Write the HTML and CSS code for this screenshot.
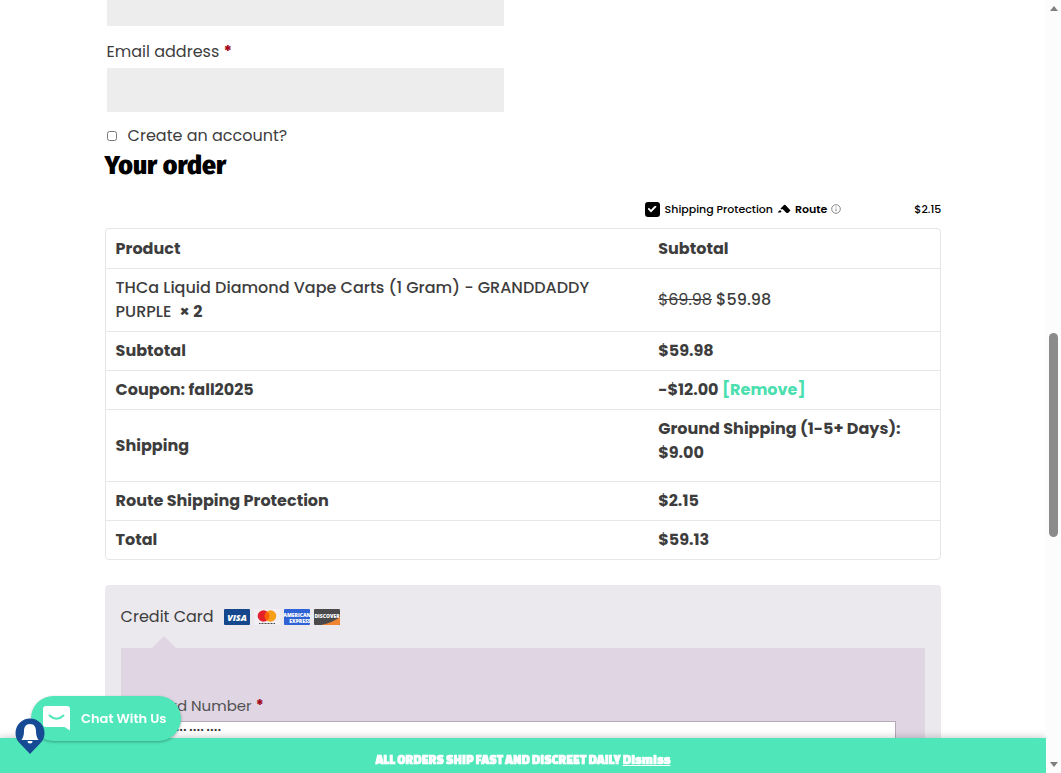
FILE: index.html
```
<!DOCTYPE html>
<html lang="en">
<head>
    <meta charset="UTF-8">
    <meta name="viewport" content="width=device-width, initial-scale=1.0">
    <title>Checkout</title>
    <link rel="stylesheet" href="styles.css">
</head>
<body>
    <main class="checkout">
        <form class="billing">
            <input class="text-input text-input-short" type="tel" aria-label="Phone">
            <label class="field-label" for="email">Email address <span class="required">*</span></label>
            <input class="text-input" type="email" id="email">
            <label class="create-account"><input type="checkbox"> Create an account?</label>
        </form>

        <h3 class="order-heading">Your order</h3>

        <div class="route">
            <label class="route-label">
                <input class="route-check" type="checkbox" checked>
                Shipping Protection
            </label>
            <svg class="route-logo" viewBox="0 0 14 10" aria-hidden="true">
                <path d="M0.5 8.5L3 6L4.5 7.5L3.5 8.5Z"/>
                <path d="M3.5 4.5L7 1Q7.700 .5 8.400 1L13.500 6.500L11 9L9.500 9L5.500 5L4.500 5.500Z"/>
            </svg>
            <strong class="route-name">Route</strong>
            <svg class="route-info" viewBox="0 0 10 10" aria-hidden="true">
                <circle cx="5" cy="5" r="4.300"/>
                <path d="M5 4.500V7.300M5 2.500V3.500"/>
            </svg>
            <span class="route-price">$2.15</span>
        </div>

        <table class="order-table">
            <thead>
                <tr><th>Product</th><th>Subtotal</th></tr>
            </thead>
            <tbody>
                <tr>
                    <td>THCa Liquid Diamond Vape Carts (1 Gram) - GRANDDADDY PURPLE&nbsp; <strong>× 2</strong></td>
                    <td><del>$69.98</del> $59.98</td>
                </tr>
            </tbody>
            <tfoot>
                <tr><th>Subtotal</th><th>$59.98</th></tr>
                <tr><th>Coupon: fall2025</th><th>-$12.00 <a href="#">[Remove]</a></th></tr>
                <tr><th>Shipping</th><th><p>Ground Shipping (1-5+ Days): $9.00</p></th></tr>
                <tr><th>Route Shipping Protection</th><th>$2.15</th></tr>
                <tr><th>Total</th><th>$59.13</th></tr>
            </tfoot>
        </table>

        <section class="payment">
            <div class="payment-method">
                <span>Credit Card</span>
                <svg class="card" viewBox="0 0 26 16" role="img" aria-label="Visa">
                    <rect width="26" height="16" rx="1" fill="#15478c"/>
                    <text x="13" y="12" class="visa">VISA</text>
                </svg>
                <svg class="card" viewBox="0 0 26 16" role="img" aria-label="Mastercard">
                    <rect width="26" height="16" rx="1" fill="#f2eff4"/>
                    <circle cx="9.500" cy="7" r="5.800" fill="#e5202a"/>
                    <circle cx="16.500" cy="7" r="5.800" fill="#f79e1b"/>
                    <path d="M13 2.400a5.800 5.800 0 0 1 0 9.200a5.800 5.800 0 0 1 0-9.200" fill="#ff5f00"/>
                    <path d="M5 14.500H21" stroke="#444" stroke-dasharray="1 .5"/>
                </svg>
                <svg class="card" viewBox="0 0 26 16" role="img" aria-label="American Express">
                    <rect width="26" height="16" rx="1" fill="#2f62d4"/>
                    <text x="13" y="7.500" class="amex">AMERICAN</text>
                    <text x="16" y="13.500" class="amex">EXPRESS</text>
                </svg>
                <svg class="card" viewBox="0 0 26 16" role="img" aria-label="Discover">
                    <rect width="26" height="16" rx="1" fill="#4a4a4c"/>
                    <path d="M26 8Q20 13 7 16H25L26 15Z" fill="#f08432"/>
                    <text x="13" y="9" class="discover">DISCOVER</text>
                </svg>
            </div>
            <div class="payment-box">
                <label class="card-label" for="card-number">Card Number <span class="required">*</span></label>
                <input class="card-input" id="card-number" type="text" placeholder="•••• •••• •••• ••••">
            </div>
        </section>
    </main>

    <p class="store-notice">ALL ORDERS SHIP FAST AND DISCREET DAILY <a href="#">Dismiss</a></p>

    <button class="chat" type="button">
        <svg class="chat-icon" viewBox="0 0 27 25" aria-hidden="true">
            <path d="M3 0H24Q27 0 27 3V24.500L21.500 21H3Q0 21 0 18V3Q0 0 3 0Z" fill="#fff"/>
            <path d="M6.500 9.500Q13.500 16 20.500 9.500" fill="none" stroke="#4fe6ba" stroke-width="2" stroke-linecap="round"/>
        </svg>
        Chat With Us
    </button>

    <button class="bell" type="button" aria-label="Notifications">
        <svg viewBox="0 0 30 37" aria-hidden="true">
            <path d="M15 36L4.500 25Q0.500 21 .5 15A14.500 14.500 0 0 1 29.500 15Q29.500 21 25.500 25Z" fill="#164a94"/>
            <path d="M15 6C10.500 6 9 9.500 9 13C9 17.500 8 19.500 6.500 22H23.500C22 19.500 21 17.500 21 13C21 9.500 19.500 6 15 6Z" fill="#fff"/>
            <path d="M12.500 23H17.500A2.500 2.500 0 0 1 12.500 23Z" fill="#fff"/>
        </svg>
    </button>

    <div class="scrollbar" aria-hidden="true">
        <svg viewBox="0 0 8 5"><path d="M0 5L4 0L8 5Z"/></svg>
        <span class="scroll-thumb"></span>
        <svg viewBox="0 0 8 5"><path d="M0 0L4 5L8 0Z"/></svg>
    </div>
</body>
</html>
```
FILE: styles.css
```
* {
    box-sizing: border-box;
}

body {
    margin: 0;
    height: 100vh;
    overflow: hidden;
    padding-right: 15px;
    background: #fff;
    color: #3d3d3d;
    font-family: Poppins, Inter, sans-serif;
    font-size: 16px;
    line-height: 24px;
}

button,
input {
    font-family: inherit;
}

.checkout {
    width: 80%;
    margin: 0 auto;
}

/* Billing fields */
.billing {
    display: flex;
    flex-direction: column;
    width: 48%;
    padding: 0 2px;
}

.text-input {
    width: 100%;
    height: 44px;
    border: 0;
    padding: 0 12px;
    background: #ededed;
    font-size: 16px;
}

.text-input-short {
    height: 26px;
}

.field-label {
    padding: 14px 0 4px;
}

.required {
    color: #a00015;
    font-weight: 700;
}

.create-account {
    display: flex;
    align-items: center;
    gap: 11px;
    padding-top: 12px;
}

.create-account input {
    width: 10px;
    height: 10px;
    margin: 0;
}

.order-heading {
    margin: 3px 0 0;
    color: #000;
    font-family: "Fira Sans", Lato, sans-serif;
    font-size: 25px;
    font-weight: 900;
    line-height: 30px;
}

/* Route shipping protection */
.route {
    display: flex;
    align-items: center;
    justify-content: flex-end;
    gap: 4px;
    height: 20px;
    margin: 18px 0 9px;
    color: #000;
    font-size: 11px;
    font-weight: 500;
}

.route-label {
    display: flex;
    align-items: center;
    gap: 5px;
}

.route-check {
    display: flex;
    align-items: center;
    justify-content: center;
    width: 15px;
    height: 15px;
    margin: 0;
    border-radius: 3px;
    background: #000;
    appearance: none;
}

.route-check:checked::after {
    content: "";
    width: 9px;
    height: 7px;
    background: #fff;
    clip-path: polygon(0 50%, 14% 32%, 38% 62%, 84% 0, 100% 18%, 38% 100%);
}

.route-logo {
    width: 14px;
    height: 10px;
}

.route-name {
    font-weight: 600;
}

.route-info {
    width: 10px;
    height: 10px;
    fill: none;
    stroke: #888;
}

.route-price {
    width: 96px;
    text-align: right;
}

/* Order review */
.order-table {
    width: 100%;
    margin-bottom: 25px;
    border: 1px solid #e6e6e6;
    border-radius: 4px;
    border-spacing: 0;
    table-layout: fixed;
}

.order-table th,
.order-table td {
    padding: 7px 9px 7px 10px;
    border-top: 1px solid #e6e6e6;
    text-align: left;
    vertical-align: middle;
}

.order-table td {
    font-weight: 500;
}

.order-table del {
    font-weight: 400;
}

.order-table thead th {
    padding-top: 8px;
    border-top: 0;
}

.order-table th:first-child {
    width: 65%;
}

.order-table p {
    margin: 0 0 9px;
}

.order-table a {
    color: #4bdfb0;
    text-decoration: none;
}

/* Payment */
.payment {
    padding: 16px;
    border-radius: 4px;
    background: #ebe9ee;
}

.payment-method {
    display: flex;
    align-items: center;
    gap: 4px;
    height: 31px;
}

.payment-method span {
    margin-right: 6px;
}

.card {
    width: 26px;
    height: 16px;
}

.card text {
    fill: #fff;
    font-family: "Open Sans", sans-serif;
    font-weight: 800;
    text-anchor: middle;
}

.card .visa {
    font-size: 9px;
    font-style: italic;
}

.card .amex {
    font-size: 5px;
}

.card .discover {
    font-size: 5px;
}

.payment-box {
    position: relative;
    display: flex;
    flex-direction: column;
    margin-top: 16px;
    padding: 46px 29px 60px;
    background: #dfd5e3;
    font-size: 15px;
}

.payment-box::before {
    content: "";
    position: absolute;
    top: -12px;
    left: 31px;
    border: 12px solid transparent;
    border-top: 0;
    border-bottom-color: #dfd5e3;
}

.card-label {
    margin-bottom: 3px;
    color: #515151;
}

.card-input {
    width: 100%;
    height: 40px;
    padding: 0 4px 22px;
    border: 1px solid #b5aab8;
    background: #fff;
    font-size: 9px;
}

.card-input::placeholder {
    color: #333;
}

/* Fixed overlays */
.store-notice {
    position: fixed;
    right: 15px;
    bottom: 0;
    left: 0;
    margin: 0;
    padding: 10px 0 1px;
    background: #4fe6ba;
    box-shadow: 0 0 8px rgba(0, 0, 0, 0.25);
    color: #fff;
    font-family: "Changa One", "Open Sans", sans-serif;
    font-size: 13px;
    font-weight: 800;
    text-align: center;
}

.store-notice a {
    color: #fff;
}

.chat {
    position: fixed;
    bottom: 32px;
    left: 31px;
    display: flex;
    align-items: center;
    gap: 11px;
    height: 45px;
    padding: 0 15px 0 12px;
    border: 0;
    border-radius: 23px;
    background: #4fe6ba;
    box-shadow: 0 1px 3px rgba(0, 0, 0, 0.3);
    color: #fff;
    font-size: 13px;
    font-weight: 600;
}

.chat-icon {
    width: 27px;
    height: 25px;
}

.bell {
    position: fixed;
    bottom: 18px;
    left: 15px;
    width: 30px;
    height: 37px;
    padding: 0;
    border: 0;
    background: none;
}

.bell svg {
    display: block;
}

.scrollbar {
    position: fixed;
    top: 0;
    right: 0;
    bottom: 0;
    display: flex;
    flex-direction: column;
    align-items: center;
    width: 15px;
    padding: 6px 0;
    background: #fcfcfc;
}

.scrollbar svg {
    width: 8px;
    height: 5px;
    fill: #7f7f7f;
}

.scroll-thumb {
    width: 9px;
    height: 204px;
    margin: 322px 0 auto;
    border-radius: 5px;
    background: #8b8b8b;
}
```
